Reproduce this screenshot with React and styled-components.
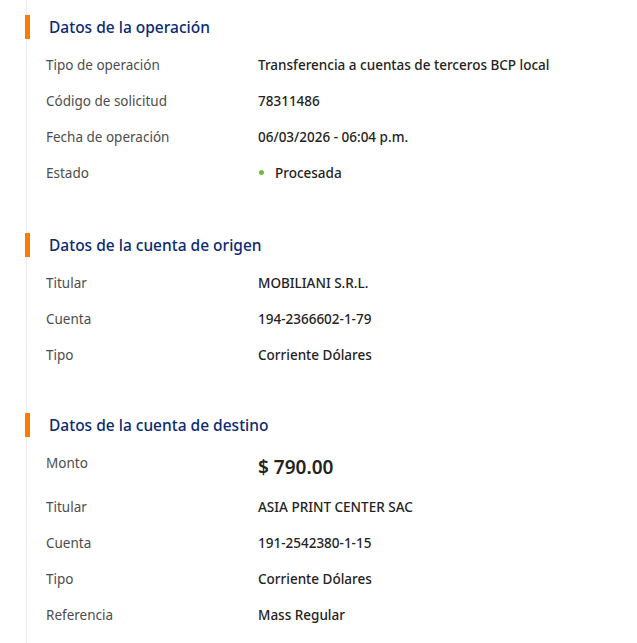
import React from "react";
import styled, { createGlobalStyle } from "styled-components";

const GlobalStyle = createGlobalStyle`
  html, body {
    margin: 0;
    padding: 0;
    background: #fff;
    font-family: "Noto Sans", "Open Sans", sans-serif;
  }
`;

const Page = styled.div`
  padding-left: 26px;
  min-height: 100vh;
  box-sizing: border-box;
`;

const Panel = styled.div`
  border-left: 1px solid #ececec;
  min-height: 643px;
  padding-top: 15px;
  box-sizing: border-box;
`;

const Section = styled.section`
  margin-bottom: ${(p) => p.gap}px;
`;

const Heading = styled.h3`
  margin: 0 0 8px -2px;
  height: 24px;
  display: flex;
  align-items: center;
  border-left: 5px solid #ff7a00;
  padding-left: 19px;
  font-size: 15.5px;
  font-weight: 500;
  color: #0b2a73;
`;

const Row = styled.div`
  display: grid;
  grid-template-columns: 212px 1fr;
  padding: 8px 0 8px 19px;
  align-items: start;
`;

const Label = styled.div`
  font-size: 13.5px;
  line-height: 20px;
  color: #4d4d4d;
`;

const Value = styled.div`
  display: flex;
  align-items: center;
  gap: 11px;
  font-size: ${(p) => (p.big ? 19 : 13.5)}px;
  line-height: ${(p) => (p.big ? 28 : 20)}px;
  font-weight: ${(p) => (p.big ? 600 : 500)};
  color: #232323;
  padding-left: ${(p) => (p.dot ? 1 : 0)}px;
`;

const Dot = styled.span`
  width: 5px;
  height: 5px;
  border-radius: 50%;
  background: #6cbd3a;
  margin-top: -2px;
`;

const sections = [
  {
    title: "Datos de la operación",
    gap: 42,
    rows: [
      ["Tipo de operación", "Transferencia a cuentas de terceros BCP local"],
      ["Código de solicitud", "78311486"],
      ["Fecha de operación", "06/03/2026 - 06:04 p.m."],
      ["Estado", "Procesada", "dot"],
    ],
  },
  {
    title: "Datos de la cuenta de origen",
    gap: 40,
    rows: [
      ["Titular", "MOBILIANI S.R.L."],
      ["Cuenta", "194-2366602-1-79"],
      ["Tipo", "Corriente Dólares"],
    ],
  },
  {
    title: "Datos de la cuenta de destino",
    gap: 0,
    rows: [
      ["Monto", "$ 790.00", "big"],
      ["Titular", "ASIA PRINT CENTER SAC"],
      ["Cuenta", "191-2542380-1-15"],
      ["Tipo", "Corriente Dólares"],
      ["Referencia", "Mass Regular"],
    ],
  },
];

export default function App() {
  return (
    <>
      <GlobalStyle />
      <Page>
        <Panel>
          {sections.map((s) => (
            <Section key={s.title} gap={s.gap}>
              <Heading>{s.title}</Heading>
              {s.rows.map(([label, value, kind]) => (
                <Row key={label + value}>
                  <Label>{label}</Label>
                  <Value big={kind === "big"} dot={kind === "dot"}>
                    {kind === "dot" && <Dot />}
                    {value}
                  </Value>
                </Row>
              ))}
            </Section>
          ))}
        </Panel>
      </Page>
    </>
  );
}
